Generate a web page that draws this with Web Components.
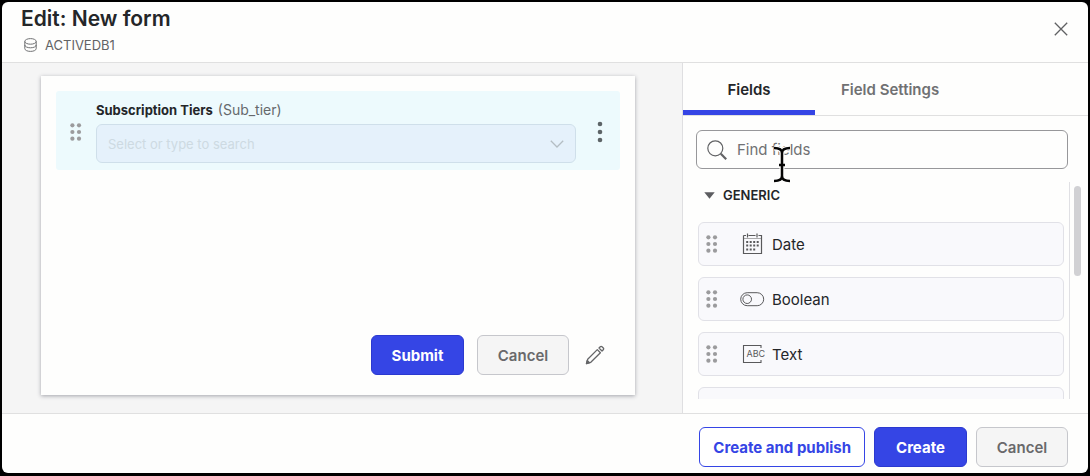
<!DOCTYPE html>
<html lang="en">
<head>
<meta charset="utf-8">
<meta name="viewport" content="width=device-width, initial-scale=1">
<title>Edit: New form</title>
<style>
    body{
        margin: 0;
        background: #000;
        color: #242629;
        font-family: Inter, "Liberation Sans", sans-serif;
        font-size: 15px;
        line-height: 20px;
    }
</style>
</head>
<body>

<form-dialog>
    <dialog-header slot="header" database="ACTIVEDB1">Edit: New form</dialog-header>

    <form-canvas slot="canvas">
        <form-field name="Sub_tier" placeholder="Select or type to search">Subscription Tiers</form-field>
        <ui-button slot="actions" variant="primary">Submit</ui-button>
        <ui-button slot="actions" variant="neutral">Cancel</ui-button>
    </form-canvas>

    <field-panel slot="panel">
        <field-group label="GENERIC">
            <field-item icon="date">Date</field-item>
            <field-item icon="boolean">Boolean</field-item>
            <field-item icon="text">Text</field-item>
            <field-item></field-item>
        </field-group>
    </field-panel>

    <ui-button slot="footer" variant="outline">Create and publish</ui-button>
    <ui-button slot="footer" variant="primary">Create</ui-button>
    <ui-button slot="footer" variant="neutral">Cancel</ui-button>
</form-dialog>

<script>
function defineComponent(name, html, setup){
    const template = document.createElement("template");
    template.innerHTML = html;

    window.customElements.define(name, class extends HTMLElement{
        constructor(){
            super();
            this.attachShadow({mode: "open"});
            this.shadowRoot.appendChild(template.content.cloneNode(true));
            if(setup) setup(this, this.shadowRoot);
        }
    });
}

/* Button */
defineComponent("ui-button", `
    <style>
        :host{
            display: block;
        }
        button{
            box-sizing: border-box;
            height: 40px;
            min-width: 92px;
            padding: 2px 13px 0;
            border: 1px solid #c6c7cc;
            border-radius: 6px;
            background: #f5f5f5;
            color: #69696b;
            font: 600 15px/20px Inter, "Liberation Sans", sans-serif;
            white-space: nowrap;
        }
        :host([variant="primary"]) button{
            min-width: 93px;
            border-color: #2b39cf;
            background: #3545e5;
            color: #fff;
            font-weight: 700;
        }
        :host([variant="outline"]) button{
            border-color: #3545e5;
            background: #fff;
            color: #3545e5;
            font-weight: 700;
        }
    </style>
    <button type="button"><slot></slot></button>
`);

/* Six dot drag handle */
defineComponent("drag-handle", `
    <style>
        :host{
            display: block;
            width: 12px;
            height: 18px;
            color: #9b9b9d;
        }
        svg{
            display: block;
        }
    </style>
    <svg width="12" height="18" fill="currentColor" aria-hidden="true">
        <circle cx="2.4" cy="2.3" r="2.1"/><circle cx="9" cy="2.3" r="2.1"/>
        <circle cx="2.4" cy="9" r="2.1"/><circle cx="9" cy="9" r="2.1"/>
        <circle cx="2.4" cy="15.7" r="2.1"/><circle cx="9" cy="15.7" r="2.1"/>
    </svg>
`);

/* Dialog frame */
defineComponent("form-dialog", `
    <style>
        :host{
            box-sizing: border-box;
            display: flex;
            height: 100vh;
            padding: 2px 2px 3px;
        }
        .dialog{
            flex: 1;
            min-width: 0;
            display: flex;
            flex-direction: column;
            background: #fefefd;
            border-radius: 6px;
            overflow: hidden;
        }
        .content{
            flex: 1;
            min-height: 0;
            display: grid;
            grid-template-columns: 1fr 406px;
            grid-template-rows: 100%;
            border-top: 1px solid #e0e0e0;
            border-bottom: 1px solid #e0e0e0;
        }
        footer{
            display: flex;
            justify-content: flex-end;
            gap: 9px;
            padding: 13px 20px 6px;
        }
    </style>
    <div class="dialog">
        <slot name="header"></slot>
        <div class="content">
            <slot name="canvas"></slot>
            <slot name="panel"></slot>
        </div>
        <footer><slot name="footer"></slot></footer>
    </div>
`);

/* Title, database and close button */
defineComponent("dialog-header", `
    <style>
        :host{
            display: flex;
            justify-content: space-between;
            align-items: flex-start;
            padding: 5px 20px 7px 19px;
        }
        h1{
            margin: 0;
            font-size: 21px;
            font-weight: 600;
            line-height: 24px;
        }
        .database{
            display: flex;
            align-items: center;
            gap: 8px;
            margin-top: 4px;
            padding-left: 3px;
            color: #626365;
            font-size: 13px;
        }
        svg{
            display: block;
        }
        button{
            margin-top: 15px;
            padding: 0;
            border: 0;
            background: none;
            color: #606163;
        }
    </style>
    <div>
        <h1><slot></slot></h1>
        <div class="database">
            <svg width="13" height="14" fill="none" stroke="#707173" aria-hidden="true">
                <ellipse cx="6.5" cy="3.4" rx="5.7" ry="2.8"/>
                <path d="M.8 3.4v7.2c0 1.6 2.5 2.8 5.7 2.8s5.7-1.2 5.7-2.8V3.4M.8 7c0 1.6 2.5 2.8 5.7 2.8s5.7-1.2 5.7-2.8"/>
            </svg>
            <span id="database"></span>
        </div>
    </div>
    <button type="button" aria-label="Close">
        <svg width="14" height="14" fill="none" stroke="currentColor" stroke-width="1.3"><path d="M.8.8l12.4 12.4M13.2.8L.8 13.2"/></svg>
    </button>
`, (host, root) => {
    root.getElementById("database").textContent = host.getAttribute("database");
});

/* Form preview */
defineComponent("form-canvas", `
    <style>
        :host{
            box-sizing: border-box;
            display: flex;
            padding: 13px 47px 18px 39px;
            background: #f5f5f5;
        }
        .card{
            flex: 1;
            min-width: 0;
            display: flex;
            flex-direction: column;
            justify-content: space-between;
            padding: 15px 15px 20px;
            background: #fefefd;
            box-shadow: 0 1px 4px rgba(40, 42, 60, .4);
        }
        .actions{
            display: flex;
            justify-content: flex-end;
            align-items: center;
            gap: 13px;
            padding-right: 15px;
        }
        .edit{
            margin-left: 3px;
            padding: 0;
            border: 0;
            background: none;
            color: #656668;
        }
        svg{
            display: block;
        }
    </style>
    <div class="card">
        <slot></slot>
        <div class="actions">
            <slot name="actions"></slot>
            <button class="edit" type="button" aria-label="Edit buttons">
                <svg width="20" height="20" fill="none" stroke="currentColor" stroke-width="1.3" stroke-linejoin="round">
                    <path d="M1.5 18.5l1.2-4.3L12.3 4.600l3.100 3.100-9.600 9.600z"/>
                    <path d="M14 3l1.300-1.300c.5-.5 1.200-.5 1.700 0L18.300 3c.5.5.5 1.200 0 1.700L17 6z"/>
                    <path d="M1.5 18.500l.8-3 2.200 2.200z" fill="currentColor"/>
                </svg>
            </button>
        </div>
    </div>
`);

/* Drop-down field in the form preview */
defineComponent("form-field", `
    <style>
        :host{
            display: grid;
            grid-template-columns: 26px 1fr 44px;
            align-items: center;
            padding: 9px 0 7px 14px;
            border-radius: 3px;
            background: #edfafd;
        }
        label{
            display: flex;
            align-items: baseline;
            gap: 5px;
            height: 20px;
            margin-bottom: 4px;
            font-size: 13px;
            font-weight: 700;
        }
        #name{
            color: #65696c;
            font-size: 14px;
            font-weight: 400;
        }
        .select{
            display: grid;
            align-items: center;
        }
        .select > *{
            grid-area: 1 / 1;
        }
        select{
            box-sizing: border-box;
            width: 100%;
            height: 39px;
            padding: 0 11px;
            border: 1px solid #cfdfea;
            border-radius: 6px;
            appearance: none;
            background: #e5f1fb;
            color: #cddae2;
            font: 13px/20px Inter, "Liberation Sans", sans-serif;
        }
        .select svg{
            justify-self: end;
            margin-right: 12px;
            pointer-events: none;
        }
        button{
            justify-self: center;
            padding: 0 0 0 4px;
            border: 0;
            background: none;
            color: #5d6467;
        }
        svg{
            display: block;
        }
    </style>
    <drag-handle></drag-handle>
    <div>
        <label for="select"><slot></slot> <span id="name"></span></label>
        <div class="select">
            <select id="select"><option id="placeholder"></option></select>
            <svg width="14" height="8" fill="none" stroke="#b4bdc3" stroke-width="1.3" aria-hidden="true"><path d="M.8.8L7 7 13.2.8"/></svg>
        </div>
    </div>
    <button type="button" aria-label="Field options">
        <svg width="6" height="22" fill="currentColor"><circle cx="3" cy="3" r="2.3"/><circle cx="3" cy="11" r="2.3"/><circle cx="3" cy="19" r="2.3"/></svg>
    </button>
`, (host, root) => {
    root.getElementById("name").textContent = "(" + host.getAttribute("name") + ")";
    root.getElementById("placeholder").textContent = host.getAttribute("placeholder");
});

/* Side panel with tabs, search and field list */
defineComponent("field-panel", `
    <style>
        :host{
            box-sizing: border-box;
            display: flex;
            flex-direction: column;
            min-height: 0;
            padding-bottom: 14px;
            border-left: 1px solid #dfdfe1;
        }
        .tabs{
            display: flex;
            border-bottom: 1px solid #e0e0e0;
        }
        .tabs button{
            box-sizing: border-box;
            height: 52px;
            padding: 6px 26px 0;
            border: 0;
            border-bottom: 5px solid transparent;
            background: none;
            color: #707173;
            font: 600 15px/20px Inter, "Liberation Sans", sans-serif;
        }
        .tabs button[aria-selected="true"]{
            min-width: 132px;
            border-color: #3545e5;
            color: #242629;
        }
        .search{
            position: relative;
            display: flex;
            align-items: center;
            gap: 10px;
            height: 37px;
            margin: 14px 20px 13px 13px;
            padding: 0 10px;
            border: 1px solid #97979a;
            border-radius: 6px;
        }
        input{
            flex: 1;
            min-width: 0;
            padding: 0;
            border: 0;
            outline: 0;
            background: none;
            font: 15px/20px Inter, "Liberation Sans", sans-serif;
        }
        input::placeholder{
            color: #707173;
            opacity: 1;
        }
        .cursor{
            position: absolute;
            left: 76px;
            top: 14px;
        }
        .scroller{
            flex: 1;
            min-height: 0;
            display: flex;
            margin-right: 7px;
        }
        .list{
            flex: 1;
            min-width: 0;
            padding: 4px 5px 0 15px;
            border-right: 1px solid #e0e0e4;
            overflow: hidden;
        }
        .thumb{
            width: 7px;
            height: 90px;
            margin: 4px 0 0 4px;
            border-radius: 4px;
            background: #d1d1d4;
        }
    </style>
    <div class="tabs" role="tablist">
        <button type="button" role="tab" aria-selected="true">Fields</button>
        <button type="button" role="tab" aria-selected="false">Field Settings</button>
    </div>
    <div class="search">
        <svg width="20" height="20" fill="none" stroke="#626365" aria-hidden="true">
            <circle cx="8.3" cy="8.3" r="7.5" stroke-width="1.2"/>
            <path d="M13.8 13.8l5.4 5.4" stroke-width="2.2"/>
        </svg>
        <input type="text" placeholder="Find fields" aria-label="Find fields">
        <svg class="cursor" width="18" height="38" fill="none" aria-hidden="true">
            <path d="M1 3c4.500 0 8 1.500 8 5C9 4.500 12.500 3 17 3M9 8v23M1 36c4.500 0 8-1.500 8-5 0 3.500 3.500 5 8 5M6 20h6" stroke="#fefefd" stroke-width="5"/>
            <path d="M1 3c4.500 0 8 1.500 8 5C9 4.500 12.500 3 17 3M9 8v23M1 36c4.500 0 8-1.500 8-5 0 3.500 3.500 5 8 5M6 20h6" stroke="#050505" stroke-width="2.500"/>
        </svg>
    </div>
    <div class="scroller">
        <div class="list"><slot></slot></div>
        <div class="thumb"></div>
    </div>
`);

/* Titled group of fields */
defineComponent("field-group", `
    <style>
        :host{
            display: block;
        }
        h2{
            display: flex;
            align-items: center;
            gap: 8px;
            margin: 0 0 17px;
            padding-left: 6px;
            font-size: 13px;
            font-weight: 600;
            line-height: 19px;
        }
        .fields{
            display: flex;
            flex-direction: column;
            gap: 11px;
        }
    </style>
    <h2>
        <svg width="11" height="7" fill="#5c5d60" aria-hidden="true"><path d="M.3.3h10.400L5.500 6.800z"/></svg>
        <span id="label"></span>
    </h2>
    <div class="fields"><slot></slot></div>
`, (host, root) => {
    root.getElementById("label").textContent = host.getAttribute("label");
});

/* Draggable field type */
const fieldIcons = {
    date: `
        <path d="M3.500 3.500h2.500M8.500 3.500h7M18.500 3.500h3v18h-18v-18M7.500 1.500v4M17 1.500v4" stroke-width="1.200"/>
        <path d="M3.500 6.500h18" stroke-width=".5"/>
        <path d="M6.200 10h13M6.200 13.500h13M6.200 17.500h10" stroke-width="2" stroke-dasharray="2 1.500"/>`,
    boolean: `
        <rect x=".7" y="5.700" width="23" height="13" rx="6.500"/>
        <circle cx="7.200" cy="12.200" r="4.300"/>`,
    text: `
        <path d="M21 6V3.500H3.500v17H21V18" stroke-width="1.100"/>
        <text x="6.500" y="15" font-size="9" fill="#59595b" stroke="none">ABC</text>`
};

defineComponent("field-item", `
    <style>
        :host{
            box-sizing: border-box;
            display: flex;
            align-items: center;
            height: 44px;
            padding-left: 7px;
            border: 1px solid #e1e1e7;
            border-radius: 6px;
            background: #f9f9fc;
        }
        #icon{
            margin: 0 7px 0 22px;
            overflow: visible;
        }
        .label{
            padding-top: 2px;
        }
    </style>
    <drag-handle></drag-handle>
    <svg id="icon" width="25" height="24" fill="none" stroke="#59595b" aria-hidden="true"></svg>
    <span class="label"><slot></slot></span>
`, (host, root) => {
    root.getElementById("icon").innerHTML = fieldIcons[host.getAttribute("icon")] || "";
});
</script>
</body>
</html>
